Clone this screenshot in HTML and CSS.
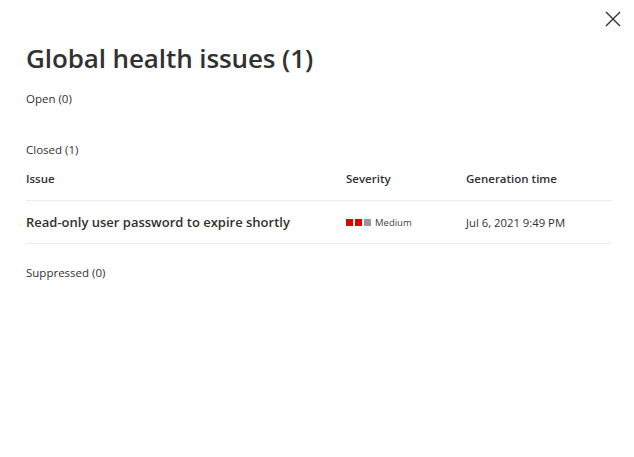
FILE: index.html
```html
<!DOCTYPE html>
<html>
<head>
<meta charset="utf-8">
<link rel="stylesheet" href="styles.css">
</head>
<body>
<div class="panel">
  <button class="close" aria-label="Close">
    <svg width="16" height="16" viewBox="0 0 16 16"><path d="M1 1L15 15M15 1L1 15" stroke="#323130" stroke-width="1.4" fill="none"/></svg>
  </button>
  <h1 class="title">Global health issues (1)</h1>
  <div class="section open">Open (0)</div>
  <div class="section closed">Closed (1)</div>
  <div class="table">
    <div class="row head">
      <div class="c1">Issue</div>
      <div class="c2">Severity</div>
      <div class="c3">Generation time</div>
    </div>
    <div class="row body">
      <div class="c1 issue">Read-only user password to expire shortly</div>
      <div class="c2 sev">
        <span class="sq red"></span><span class="sq red"></span><span class="sq grey"></span>
        <span class="sevlabel">Medium</span>
      </div>
      <div class="c3">Jul 6, 2021 9:49 PM</div>
    </div>
  </div>
  <div class="section supp">Suppressed (0)</div>
</div>
</body>
</html>
```
FILE: styles.css
```css
html, body { margin: 0; padding: 0; background: #fff; }
body { font-family: "Open Sans", "Noto Sans", sans-serif; color: #323130; }
.panel { position: relative; padding: 40px 22px 0 26px; width: 586px; }
.close { position: absolute; top: 11px; right: 13px; border: 0; background: none; padding: 0; width: 16px; height: 16px; }
.close svg { display: block; }
.title { margin: 0; font-size: 26px; font-weight: 600; line-height: 36px; letter-spacing: -0.1px; }
.section { font-size: 11.5px; line-height: 16px; }
.open { margin-top: 15px; }
.closed { margin-top: 35px; }
.supp { margin-top: 21px; }
.table { margin-top: 13px; }
.row { display: flex; align-items: center; }
.head { height: 29px; border-bottom: 1px solid #edebe9; font-size: 11.5px; font-weight: 600; align-items: flex-start; }
.body { height: 42px; border-bottom: 1px solid #edebe9; font-size: 11.3px; }
.c1 { width: 320px; }
.c2 { width: 120px; }
.c3 { flex: 1; }
.issue { font-size: 13px; font-weight: 600; }
.sev { display: flex; align-items: center; }
.sq { width: 7px; height: 7px; margin-right: 2px; display: inline-block; }
.red { background: #e00000; }
.grey { background: #999; }
.sevlabel { font-size: 9.5px; margin-left: 2px; color: #444; }
```
